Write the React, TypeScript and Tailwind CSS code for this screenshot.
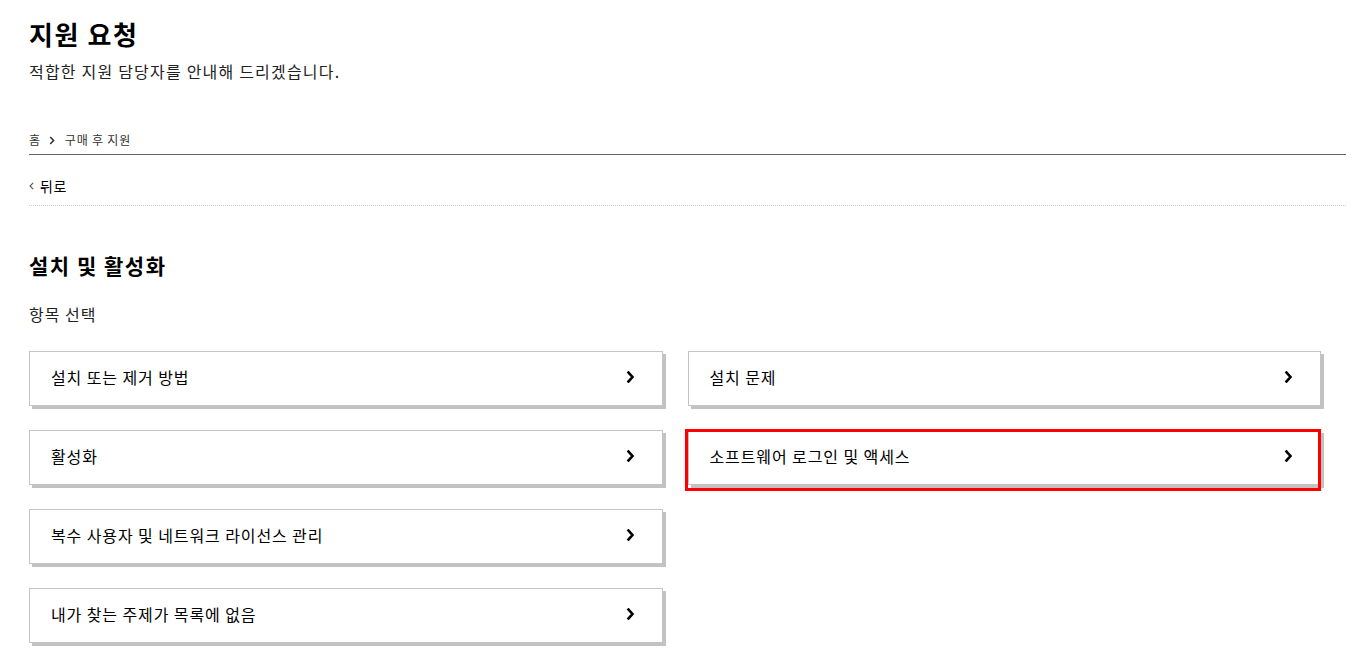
import React from 'react';

// Support request — pick a topic card
const LEFT = ['설치 또는 제거 방법', '활성화', '복수 사용자 및 네트워크 라이선스 관리', '내가 찾는 주제가 목록에 없음'];
const RIGHT = ['설치 문제', '소프트웨어 로그인 및 액세스'];

function Chevron() {
  return (
    <svg width="9" height="12" viewBox="0 0 9 12" aria-hidden="true">
      <path d="M2.5 1.5 L6.5 6 L2.5 10.5" fill="none" stroke="#000" strokeWidth="2.6" strokeLinecap="square" />
    </svg>
  );
}

function TopicCard({ label, marked }: { label: string; marked?: boolean }) {
  return (
    <div className="relative">
      <button
        type="button"
        className="flex h-[55px] w-full items-center justify-between border border-[#c4c4c4] bg-white pb-[3px] pl-[21px] pr-[27px] text-left text-[16px] tracking-[0.9px] text-black shadow-[3px_3px_0_#c2c2c2]"
      >
        <span>{label}</span>
        <Chevron />
      </button>
      {/* annotation outline over the selected card */}
      {marked && (
        <div className="pointer-events-none absolute -top-[1px] -left-[3px] right-0 -bottom-[6px] border-[3px] border-[#ff0000]" />
      )}
    </div>
  );
}

export default function App() {
  return (
    <div className="min-h-[650px] bg-white font-['Noto_Sans_CJK_KR','Noto_Sans',sans-serif] text-black">
      <div className="pl-[29px] pr-[9px]">
        <h1 className="pt-[18px] text-[26px] leading-[32px] font-bold tracking-[1.6px]">지원 요청</h1>
        <p className="mt-[9px] text-[16px] leading-[24px] tracking-[1.2px] text-[#222]">적합한 지원 담당자를 안내해 드리겠습니다.</p>

        {/* Breadcrumb */}
        <nav className="mt-[48px] flex items-center border-b border-[#666] pb-[5px] text-[12px] leading-[18px] tracking-[0.8px] text-[#333]">
          <span>홈</span>
          <svg width="6" height="9" viewBox="0 0 6 9" className="mr-[10px] ml-[8px]" aria-hidden="true">
            <path d="M1.2 1 L4.6 4.5 L1.2 8" fill="none" stroke="#333" strokeWidth="1.6" />
          </svg>
          <span>구매 후 지원</span>
        </nav>

        {/* Back */}
        <div className="mt-[21px] border-b border-dotted border-[#cfcfcf] pb-[9px]">
          <a className="flex items-center text-[14px] leading-[20px] tracking-[0.6px] text-black">
            <svg width="5" height="8" viewBox="0 0 5 8" className="mr-[6px]" aria-hidden="true">
              <path d="M4.2 0.8 L1 4 L4.2 7.2" fill="none" stroke="#555" strokeWidth="1.1" />
            </svg>
            뒤로
          </a>
        </div>

        <h2 className="mt-[45px] text-[21px] leading-[28px] font-bold tracking-[1.5px]">설치 및 활성화</h2>
        <p className="mt-[23px] text-[16px] leading-[24px] tracking-[1px] text-[#222]">항목 선택</p>

        <div className="mt-[25px] grid grid-cols-2">
          <div className="flex flex-col gap-[24px] pr-[25px]">
            {LEFT.map(l => (
              <TopicCard key={l} label={l} />
            ))}
          </div>
          <div className="flex flex-col gap-[24px] pr-[25px]">
            {RIGHT.map((l, i) => (
              <TopicCard key={l} label={l} marked={i === 1} />
            ))}
          </div>
        </div>
      </div>
    </div>
  );
}
